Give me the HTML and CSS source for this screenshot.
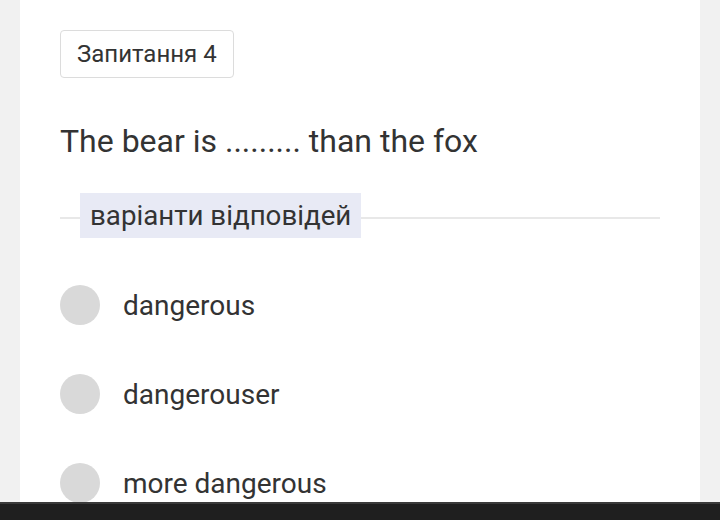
FILE: index.html
```html
<!DOCTYPE html>
<html lang="uk">
  <head>
    <meta charset="UTF-8" />
    <meta name="viewport" content="width=device-width, initial-scale=1.0" />
    <title>Запитання 4</title>
    <link rel="stylesheet" href="styles.css">
  </head>
  <body>
    <div class="screen">
      <div class="card">
        <!-- Question number -->
        <div class="badge">Запитання 4</div>

        <p class="question">The bear is ......... than the fox</p>

        <!-- Divider with label -->
        <div class="divider">
          <span class="divider-label">варіанти відповідей</span>
        </div>

        <ul class="options">
          <li class="option"><span class="radio"></span>dangerous</li>
          <li class="option"><span class="radio"></span>dangerouser</li>
          <li class="option"><span class="radio"></span>more dangerous</li>
        </ul>
      </div>
    </div>
    <div class="nav-bar"></div>
  </body>
</html>
```

FILE: styles.css
```css
* {
  box-sizing: border-box;
  margin: 0;
  padding: 0;
}

html,
body {
  height: 100%;
}

body {
  font-family: Roboto, "Noto Sans", sans-serif;
  background-color: #f1f1f1;
  color: #333;
  display: flex;
  flex-direction: column;
  overflow: hidden;
}

.screen {
  flex: 1;
  padding: 0 20px;
  overflow: hidden;
}

.card {
  background-color: #fff;
  height: 100%;
  padding: 30px 40px 0;
  overflow: hidden;
}

.badge {
  display: inline-block;
  height: 48px;
  line-height: 46px;
  padding: 0 16px;
  border: 1px solid #dcdcdc;
  border-radius: 4px;
  font-size: 24px;
  color: #333;
}

.question {
  margin-top: 43px;
  font-size: 32px;
  line-height: 40px;
  color: #333;
}

.divider {
  position: relative;
  margin-top: 32px;
  height: 45px;
  display: flex;
  align-items: center;
  padding-left: 20px;
}

.divider::before {
  content: "";
  position: absolute;
  left: 0;
  right: 0;
  top: 24px;
  border-top: 2px solid #e8e8e8;
}

.divider-label {
  position: relative;
  height: 45px;
  line-height: 45px;
  padding: 0 10px;
  background-color: #e8eaf5;
  font-size: 27.7px;
  color: #333;
}

.options {
  list-style: none;
  margin-top: 47px;
}

.option {
  display: flex;
  align-items: center;
  height: 40px;
  margin-bottom: 49px;
  font-size: 28px;
  color: #333;
}

.radio {
  width: 40px;
  height: 40px;
  border-radius: 50%;
  background-color: #d9d9d9;
  margin-right: 23px;
  flex-shrink: 0;
}

.nav-bar {
  height: 18px;
  background-color: #1f1f1f;
  border-top: 2px solid #3a3a3a;
  flex-shrink: 0;
}
```
